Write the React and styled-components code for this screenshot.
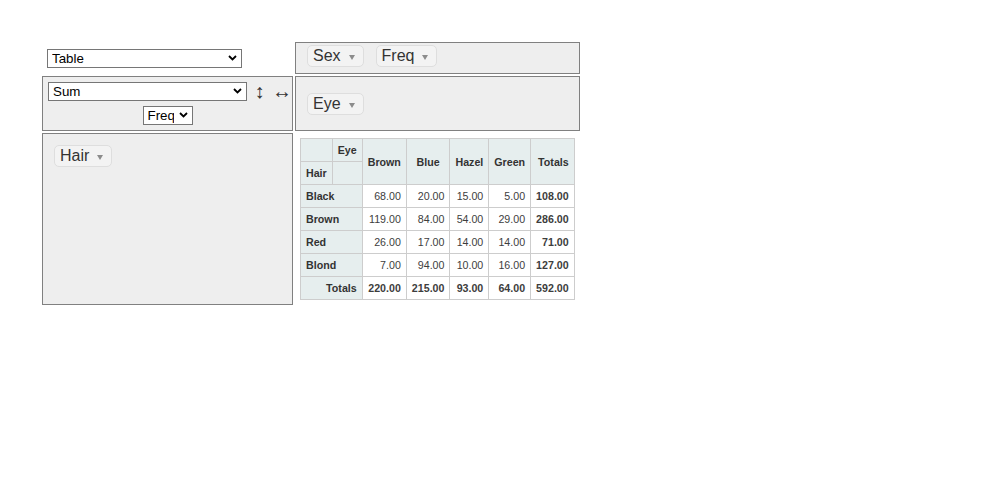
import React from "react";
import styled, { createGlobalStyle } from "styled-components";

const GlobalStyle = createGlobalStyle`
  html, body { margin: 0; padding: 0; background: #fff; }
  body { font-family: "Liberation Sans", Arial, sans-serif; color: #333; }
`;

const Page = styled.div`
  padding: 42px;
`;

/* pivot UI: 2 columns x 3 rows of drop zones */
const PivotUi = styled.div`
  display: grid;
  grid-template-columns: 251px max-content;
  grid-template-rows: 32px 55px auto;
  gap: 2px;
  color: #333;
`;

const RendererCell = styled.div`
  padding: 7px 0 0 5px;
`;

const AxisBox = styled.div`
  box-sizing: border-box;
  border: 1px solid gray;
  background: #eee;
  display: flex;
  flex-direction: ${(p) => (p.$vertical ? "column" : "row")};
  align-items: ${(p) => (p.$vertical ? "flex-start" : p.$top ? "flex-start" : "center")};
  gap: 12px;
  padding: ${(p) => (p.$vertical ? "11px" : p.$top ? "2px 11px 0" : "0 11px")};
`;

const ValsBox = styled.div`
  box-sizing: border-box;
  border: 1px solid gray;
  background: #eee;
  padding: 5px;
  display: flex;
  flex-direction: column;
  align-items: center;
  gap: 5px;
`;

const AggregatorRow = styled.div`
  display: flex;
  align-items: center;
  align-self: stretch;
  height: 19px;
`;

const OrderToggle = styled.span`
  display: inline-block;
  width: 15px;
  margin-left: 5px;
  text-align: center;
  font-family: "Liberation Sans", Arial, sans-serif;
  font-size: 20px;
  line-height: 19px;
  color: #333;
  cursor: pointer;
  white-space: nowrap;
`;

const Attr = styled.span`
  display: inline-flex;
  align-items: center;
  box-sizing: border-box;
  height: 22px;
  padding: 0 5px;
  background: #f3f3f3;
  border: 1px solid #dedede;
  border-radius: 5px;
  font-size: 16px;
  color: #333;
  white-space: nowrap;
  cursor: move;
`;

const Triangle = styled.span`
  width: 0;
  height: 0;
  border-left: 3px solid transparent;
  border-right: 3px solid transparent;
  border-top: 5px solid #8c8c8c;
  margin: 3px 3px 0 8px;
  cursor: pointer;
`;

const SelectWrap = styled.span`
  position: relative;
  display: inline-block;
  width: ${(p) => p.$w}px;
  height: 19px;
  flex: none;
`;

const NativeSelect = styled.select`
  appearance: none;
  -webkit-appearance: none;
  box-sizing: border-box;
  width: 100%;
  height: 100%;
  margin: 0;
  border: 1px solid #767676;
  border-radius: 0;
  background: #fff;
  color: #000;
  font: 13.333px "Liberation Sans", Arial, sans-serif;
  line-height: 17px;
  padding: 0 18px 0 4px;
  outline: none;
`;

const Chevron = styled.svg`
  position: absolute;
  right: 5px;
  top: 6px;
  width: 9px;
  height: 6px;
  pointer-events: none;
`;

const RenderArea = styled.div`
  padding: 5px;
`;

const PvtTable = styled.table`
  border-collapse: collapse;
  font-size: 8pt;
  text-align: left;
  font-family: "Liberation Sans", Arial, sans-serif;
`;

const Th = styled.th`
  background: #e6eeee;
  border: 1px solid #cdcdcd;
  padding: 5px;
  font-size: 8pt;
  font-weight: bold;
  color: #333;
  text-align: ${(p) => p.$align || "left"};
`;

const Td = styled.td`
  color: #3d3d3d;
  background: #fff;
  border: 1px solid #cdcdcd;
  padding: 5px;
  vertical-align: top;
  text-align: right;
  font-weight: ${(p) => (p.$total ? "bold" : "normal")};
`;

function Select({ width, value, options }) {
  return (
    <SelectWrap $w={width}>
      <NativeSelect defaultValue={value}>
        {options.map((o) => (
          <option key={o}>{o}</option>
        ))}
      </NativeSelect>
      <Chevron viewBox="0 0 9 6">
        <polyline points="1,1 4.5,4.5 8,1" fill="none" stroke="#000" strokeWidth="1.8" />
      </Chevron>
    </SelectWrap>
  );
}

function AttrChip({ name }) {
  return (
    <Attr>
      {name}
      <Triangle />
    </Attr>
  );
}

const cols = ["Brown", "Blue", "Hazel", "Green"];
const rows = [
  { label: "Black", vals: [68, 20, 15, 5] },
  { label: "Brown", vals: [119, 84, 54, 29] },
  { label: "Red", vals: [26, 17, 14, 14] },
  { label: "Blond", vals: [7, 94, 10, 16] },
];
const fmt = (n) => n.toFixed(2);

function Pivot() {
  const colTotals = cols.map((_, i) => rows.reduce((s, r) => s + r.vals[i], 0));
  const grand = colTotals.reduce((a, b) => a + b, 0);
  return (
    <PvtTable>
      <thead>
        <tr>
          <Th />
          <Th $align="right">Eye</Th>
          {cols.map((c) => (
            <Th key={c} rowSpan={2} $align="center">
              {c}
            </Th>
          ))}
          <Th rowSpan={2} $align="right">
            Totals
          </Th>
        </tr>
        <tr>
          <Th>Hair</Th>
          <Th />
        </tr>
      </thead>
      <tbody>
        {rows.map((r) => (
          <tr key={r.label}>
            <Th colSpan={2}>{r.label}</Th>
            {r.vals.map((v, i) => (
              <Td key={i}>{fmt(v)}</Td>
            ))}
            <Td $total>{fmt(r.vals.reduce((a, b) => a + b, 0))}</Td>
          </tr>
        ))}
        <tr>
          <Th colSpan={2} $align="right">
            Totals
          </Th>
          {colTotals.map((v, i) => (
            <Td key={i} $total>
              {fmt(v)}
            </Td>
          ))}
          <Td $total>{fmt(grand)}</Td>
        </tr>
      </tbody>
    </PvtTable>
  );
}

export default function App() {
  return (
    <Page>
      <GlobalStyle />
      <PivotUi>
        <RendererCell>
          <Select width={195} value="Table" options={["Table", "Table Barchart", "Heatmap"]} />
        </RendererCell>
        <AxisBox $top>
          <AttrChip name="Sex" />
          <AttrChip name="Freq" />
        </AxisBox>

        <ValsBox>
          <AggregatorRow>
            <Select width={199} value="Sum" options={["Count", "Sum", "Average"]} />
            <OrderToggle>↕</OrderToggle>
            <OrderToggle>↔</OrderToggle>
          </AggregatorRow>
          <Select width={50} value="Freq" options={["Freq", "Sex"]} />
        </ValsBox>
        <AxisBox>
          <AttrChip name="Eye" />
        </AxisBox>

        <AxisBox $vertical>
          <AttrChip name="Hair" />
        </AxisBox>
        <RenderArea>
          <Pivot />
        </RenderArea>
      </PivotUi>
    </Page>
  );
}
